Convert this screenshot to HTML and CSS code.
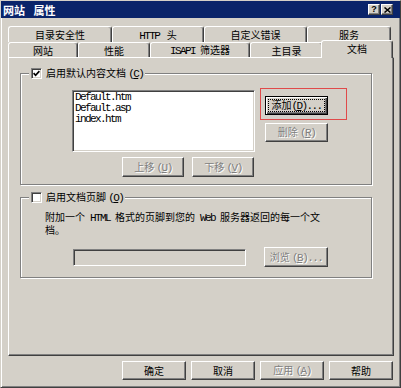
FILE: index.html
```html
<!DOCTYPE html>
<html lang="zh-CN">
<head>
<meta charset="utf-8">
<title>网站 属性</title>
<link rel="stylesheet" href="styles.css">
</head>
<body>
<div class="window">
  <div class="titlebar">
    <span class="title">网站 属性</span>
    <div class="caption-btns">
      <span class="cap-btn">?</span>
      <span class="cap-btn"><svg width="7" height="6" viewBox="0 0 7 6"><path d="M0.5 0.5 L6.5 5.5 M6.5 0.5 L0.5 5.5" stroke="#000" stroke-width="1.5" fill="none"/></svg></span>
    </div>
  </div>
  <div class="content">
    <div class="tabrow back">
      <div class="tab t-dir"><span>目录安全性</span></div>
      <div class="tab t-http"><span><span class="m">HTTP</span> <span class="sp"></span>头</span></div>
      <div class="tab t-err"><span>自定义错误</span></div>
      <div class="tab t-svc"><span>服务</span></div>
    </div>
    <div class="tabrow front">
      <div class="tab t-site"><span>网站</span></div>
      <div class="tab t-perf"><span>性能</span></div>
      <div class="tab t-isapi"><span><span class="m">ISAPI</span><span class="sp"></span>筛选器</span></div>
      <div class="tab t-home"><span>主目录</span></div>
      <div class="tab t-doc active"><span>文档</span></div>
    </div>
    <div class="panel">
      <div class="group group1">
        <div class="legend">
          <span class="cb"><svg width="7" height="7" viewBox="0 0 7 7"><path d="M0.6 3.2 L2.6 5.3 L6.4 1.2" fill="none" stroke="#000" stroke-width="1.7"/></svg></span>
          <span>启用默认内容文档 <span class="m">(<u>C</u>)</span></span>
        </div>
        <div class="g1-body">
          <div class="list-col">
            <div class="listbox">
              <div>Default.htm</div>
              <div>Default.asp</div>
              <div>index.htm</div>
            </div>
            <div class="move-row">
              <div class="btn disabled w62 h20"><span>上移 <span class="m">(<u>U</u>)</span></span></div>
              <div class="btn disabled w62 h20"><span>下移 <span class="m">(<u>V</u>)</span></span></div>
            </div>
          </div>
          <div class="side-col">
            <div class="btn default w63"><span class="focus"><span>添加<span class="m">(<u>D</u>)...</span></span></span></div>
            <div class="btn disabled w63"><span>删除 <span class="m">(<u>R</u>)</span></span></div>
          </div>
        </div>
        <div class="highlight"></div>
      </div>
      <div class="group group2">
        <div class="legend">
          <span class="cb"></span>
          <span>启用文档页脚 <span class="m">(<u>O</u>)</span></span>
        </div>
        <p class="desc">附加一个<span class="sp"></span><span class="m">HTML</span><span class="sp"></span>格式的页脚到您的<span class="sp"></span><span class="m">Web</span><span class="sp"></span>服务器返回的每一个文<br>档。</p>
        <div class="browse-row">
          <div class="field"></div>
          <div class="btn disabled w64 h20 browse"><span>浏览 <span class="m">(<u>B</u>)...</span></span></div>
        </div>
      </div>
    </div>
    <div class="actions">
      <div class="btn w64">确定</div>
      <div class="btn w64">取消</div>
      <div class="btn disabled w64"><span>应用 <span class="m">(<u>A</u>)</span></span></div>
      <div class="btn w64">帮助</div>
    </div>
  </div>
</div>
</body>
</html>
```
FILE: styles.css
```css
* { box-sizing: border-box; }
body { margin: 0; background: #D4D0C8; }

.window {
  width: 401px;
  height: 388px;
  background: #D4D0C8;
  border: 1px solid;
  border-color: #D4D0C8 #404040 #404040 #D4D0C8;
  box-shadow: inset 1px 1px #fff, inset -1px -1px #808080;
  display: flex;
  flex-direction: column;
  font-family: "Noto Sans CJK SC", sans-serif;
  font-size: 10px;
  line-height: 12px;
  color: #000;
}

.titlebar {
  height: 17px;
  background: #0A246A;
  display: flex;
  align-items: center;
  justify-content: space-between;
  padding: 0 7px 0 2px;
}
.title {
  color: #fff;
  font-weight: bold;
  font-size: 11px;
  word-spacing: 6px;
}
.caption-btns { display: flex; gap: 1px; }
.cap-btn {
  width: 12px;
  height: 11px;
  background: #D4D0C8;
  border: 1px solid;
  border-color: #fff #404040 #404040 #fff;
  box-shadow: inset -1px -1px #808080;
  display: flex;
  align-items: center;
  justify-content: center;
  font: bold 9px/1 "Liberation Sans", sans-serif;
  color: #000;
}

.content {
  flex: 1;
  display: flex;
  flex-direction: column;
  padding: 8px 6px 0 7px;
}

.m {
  font-family: "Liberation Mono", monospace;
  font-size: 11px;
  letter-spacing: -1.6px;
}
.sp { display: inline-block; width: 5px; }

.tabrow { display: flex; }
.tabrow.back { height: 16px; }
.tabrow.front { height: 15px; }
.tab {
  border-top: 1px solid #fff;
  border-left: 1px solid #fff;
  border-right: 1px solid #404040;
  box-shadow: inset -1px 0 #808080;
  border-radius: 3px 3px 0 0;
  display: flex;
  align-items: center;
  justify-content: center;
  white-space: nowrap;
  padding-top: 1px;
}
.t-dir { flex: 0 0 104px; }
.t-http { flex: 0 0 92px; }
.t-err { flex: 0 0 103px; }
.t-svc { flex: 0 0 84px; }
.t-site { flex: 0 0 70px; }
.t-perf { flex: 0 0 72px; }
.t-isapi { flex: 0 0 100px; }
.t-home { flex: 0 0 73px; }
.t-doc { flex: 0 0 68px; }
.tab.active {
  flex: 0 0 72px;
  margin: -2px -2px 0;
  height: 18px;
  position: relative;
  z-index: 1;
  background: #D4D0C8;
  padding-top: 0;
  padding-bottom: 2px;
}

.panel {
  height: 299px;
  border: 1px solid;
  border-color: #fff #404040 #404040 #fff;
  box-shadow: inset -1px -1px #808080;
  padding: 15px 0 0 11px;
}

.group {
  width: 352px;
  border: 1px solid #808080;
  box-shadow: inset 1px 1px #fff, 1px 1px #fff;
  position: relative;
}
.group1 { padding-bottom: 7px; }
.group2 { margin-top: 12px; padding-bottom: 10px; }

.legend {
  display: flex;
  align-items: center;
  gap: 4px;
  width: max-content;
  height: 12px;
  margin: -7px 0 0 8px;
  padding: 0 2px;
  background: #D4D0C8;
}
.cb {
  width: 11px;
  height: 11px;
  background: #fff;
  border: 1px solid;
  border-color: #808080 #fff #fff #808080;
  box-shadow: inset 1px 1px #404040, inset -1px -1px #D4D0C8;
  display: flex;
  align-items: center;
  justify-content: center;
}

.g1-body { display: flex; margin-top: 11px; }
.list-col {
  margin-left: 51px;
  width: 183px;
  display: flex;
  flex-direction: column;
}
.listbox {
  height: 62px;
  background: #fff;
  border: 1px solid;
  border-color: #808080 #fff #fff #808080;
  box-shadow: inset 1px 1px #404040, inset -1px -1px #D4D0C8;
  padding: 1px 2px;
  font-family: "Liberation Mono", monospace;
  font-size: 11px;
  letter-spacing: -1.6px;
  line-height: 11px;
}
.move-row {
  display: flex;
  justify-content: flex-end;
  gap: 8px;
  margin-top: 5px;
  margin-right: 1px;
}
.side-col {
  margin-left: 10px;
  padding-top: 6px;
  display: flex;
  flex-direction: column;
  gap: 8px;
}

.btn {
  height: 19px;
  background: #D4D0C8;
  border: 1px solid;
  border-color: #fff #404040 #404040 #fff;
  box-shadow: inset -1px -1px #808080;
  display: flex;
  align-items: center;
  justify-content: center;
  white-space: nowrap;
}
.w62 { width: 62px; }
.w63 { width: 63px; }
.w64 { width: 64px; }
.h20 { height: 20px; }
.btn.disabled { color: #808080; text-shadow: 1px 1px #fff; }
.btn.default {
  border-color: #000;
  box-shadow: inset 1px 1px #fff, inset -1px -1px #404040, inset -2px -2px #808080;
}
.focus {
  flex: 1;
  align-self: stretch;
  margin: 2px;
  border: 1px dotted #000;
  display: flex;
  align-items: center;
  justify-content: center;
}

.highlight {
  position: absolute;
  left: 239px;
  top: 14px;
  width: 87px;
  height: 32px;
  border: 1px solid #e04a4a;
}

.desc {
  margin: 8px 0 0 24px;
  white-space: nowrap;
}
.browse-row {
  display: flex;
  align-items: center;
  margin-top: 11px;
  padding-left: 52px;
}
.field {
  width: 173px;
  height: 17px;
  background: #D4D0C8;
  border: 1px solid;
  border-color: #808080 #fff #fff #808080;
  box-shadow: inset 1px 1px #404040, inset -1px -1px #D4D0C8;
}
.browse { margin-left: 18px; }

.actions {
  display: flex;
  justify-content: flex-end;
  gap: 5px;
  margin-top: 5px;
  padding-right: 1px;
}
```
